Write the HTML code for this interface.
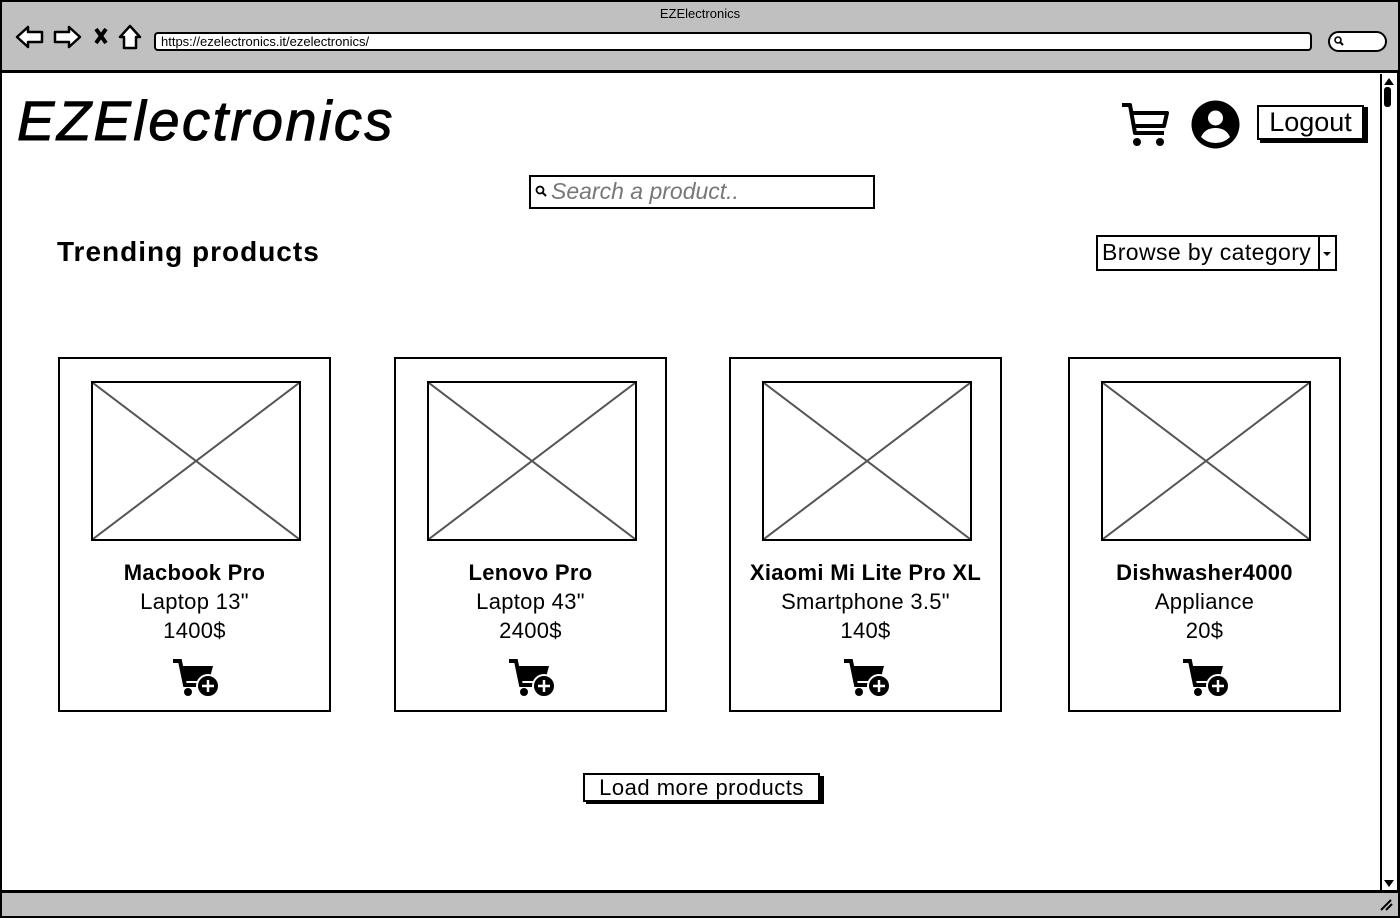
<!DOCTYPE html>
<html><head><meta charset="utf-8"><style>
*{margin:0;padding:0;box-sizing:border-box}
body{width:1400px;height:918px;background:#fff;position:relative;overflow:hidden;font-family:"Liberation Sans",sans-serif;color:#000}
.a{position:absolute}
.card{position:absolute;top:357px;width:273px;height:355px;border:2px solid #000;text-align:center}
.card .img{position:absolute;left:31px;top:22px;width:210px;height:160px;border:2px solid #000}
.card .t{position:absolute;left:0;right:0;top:199px;font-size:22px;line-height:29px;letter-spacing:0.3px}
.card .t b{font-weight:bold}
.card svg.c{position:absolute;left:111px;top:298px}
</style></head><body>
<!-- chrome -->
<div class="a" style="left:0;top:0;width:1400px;height:73px;background:#c0c0c0;border:2px solid #000;border-bottom:3px solid #000"></div>
<div class="a" style="left:0;top:6px;width:1400px;text-align:center;font-size:13px">EZElectronics</div>
<svg class="a" style="left:14px;top:22px" width="135" height="30" viewBox="0 0 135 30">
<path d="M3 15 L14 5 L14 10 L28 10 L28 20 L14 20 L14 25 Z" fill="#fff" stroke="#000" stroke-width="2.5" stroke-linejoin="round"/>
<path d="M66 15 L55 5 L55 10 L41 10 L41 20 L55 20 L55 25 Z" fill="#fff" stroke="#000" stroke-width="2.5" stroke-linejoin="round"/>
<path d="M82 7 L92 21 M92 7 L82 21" stroke="#000" stroke-width="4"/>
<path d="M116 4 L106 15 L110 15 L110 26 L122 26 L122 15 L126 15 Z" fill="#fff" stroke="#000" stroke-width="2.5" stroke-linejoin="round"/>
</svg>
<div class="a" style="left:154px;top:32px;width:1158px;height:19px;background:#fff;border:2px solid #000;border-radius:4px;font-size:13px;line-height:15px;padding-left:5px">https://ezelectronics.it/ezelectronics/</div>
<div class="a" style="left:1328px;top:31px;width:59px;height:21px;background:#fff;border:2px solid #000;border-radius:11px"></div>
<svg class="a" style="left:1333px;top:35px" width="12" height="12"><circle cx="5" cy="5" r="3" fill="none" stroke="#000" stroke-width="1.6"/><path d="M7 7 L10 10" stroke="#000" stroke-width="2"/></svg>
<div class="a" style="left:0;top:73px;width:2px;height:820px;background:#000"></div>
<div class="a" style="left:1397px;top:73px;width:3px;height:820px;background:#000"></div>
<!-- scrollbar -->
<div class="a" style="left:1380px;top:74px;width:15px;height:816px;border-left:2px solid #000"></div>
<div class="a" style="left:1384px;top:78px;width:0;height:0;border-left:5px solid transparent;border-right:5px solid transparent;border-bottom:7px solid #000"></div>
<div class="a" style="left:1384px;top:87px;width:7px;height:20px;background:#000;border-radius:3px"></div>
<div class="a" style="left:1384px;top:880px;width:0;height:0;border-left:5px solid transparent;border-right:5px solid transparent;border-top:7px solid #000"></div>
<div class="a" style="left:0;top:890px;width:1400px;height:28px;background:#c0c0c0;border:2px solid #000;border-top:3px solid #000"></div>
<svg class="a" style="left:1378px;top:896px" width="16" height="16"><path d="M3 14 L13 4 M8 14 L14 8" stroke="#000" stroke-width="2"/></svg>
<!-- header -->
<div class="a" style="left:17px;top:86px;font-size:56px;font-style:italic;line-height:70px;letter-spacing:2.5px;-webkit-text-stroke:1px #000">EZElectronics</div>
<svg class="a" style="left:1120px;top:101px" width="50" height="46" viewBox="0 0 50 46">
<path d="M2 4 L10 4 L15 32 L44 32 M12 12 L47 12 L44 25 L14 25" fill="none" stroke="#000" stroke-width="4" stroke-linejoin="round"/>
<circle cx="17" cy="41" r="4"/><circle cx="40" cy="41" r="4"/></svg>
<svg class="a" style="left:1191px;top:100px" width="49" height="49" viewBox="0 0 49 49">
<circle cx="24.5" cy="24.5" r="24" fill="#000"/><circle cx="24.5" cy="18" r="7.5" fill="#fff"/>
<path d="M10 37 Q14 28 24.5 28 Q35 28 39 37 Q33 43 24.5 43 Q16 43 10 37Z" fill="#fff"/></svg>
<div class="a" style="left:1260px;top:107px;width:108px;height:36px;background:#000"></div>
<div class="a" style="left:1257px;top:105px;width:107px;height:35px;border:2px solid #000;background:#fff;font-size:27px;line-height:31px;text-align:center">Logout</div>
<!-- search -->
<div class="a" style="left:529px;top:175px;width:346px;height:34px;border:2px solid #000"></div>
<svg class="a" style="left:534px;top:184px" width="14" height="14"><circle cx="6" cy="6" r="3.5" fill="none" stroke="#000" stroke-width="1.8"/><path d="M8.5 8.5 L12 12" stroke="#000" stroke-width="2"/></svg>
<div class="a" style="left:551px;top:176px;font-size:23px;line-height:30px;font-style:italic;color:#777">Search a product..</div>
<div class="a" style="left:57px;top:233px;font-size:28px;font-weight:bold;line-height:38px;letter-spacing:1px">Trending products</div>
<div class="a" style="left:1096px;top:235px;width:241px;height:36px;border:2px solid #000"></div>
<div class="a" style="left:1318px;top:235px;width:2px;height:36px;background:#000"></div>
<div class="a" style="left:1102px;top:236px;font-size:23px;line-height:32px;letter-spacing:0.4px">Browse by category</div>
<div class="a" style="left:1323px;top:252px;border-left:4px solid transparent;border-right:4px solid transparent;border-top:4px solid #000"></div>
<!-- cards -->
<div class="card" style="left:58px"><div class="img"><svg width="206" height="156"><path d="M0 0L206 156M206 0L0 156" stroke="#555" stroke-width="2"/></svg></div><div class="t"><b>Macbook Pro</b><br>Laptop 13"<br>1400$</div><svg class="c" width="50" height="42" viewBox="0 0 50 42"><path d="M2 4 L9 4 L14 28 L30 28" fill="none" stroke="#000" stroke-width="4"/><path d="M10 9 L42 9 L38 24 L13 24Z" fill="#000"/><circle cx="17" cy="35" r="4"/><circle cx="37" cy="29" r="11" fill="#000" stroke="#fff" stroke-width="2"/><path d="M37 23V35M31 29H43" stroke="#fff" stroke-width="2.5"/></svg></div>
<div class="card" style="left:394px"><div class="img"><svg width="206" height="156"><path d="M0 0L206 156M206 0L0 156" stroke="#555" stroke-width="2"/></svg></div><div class="t"><b>Lenovo Pro</b><br>Laptop 43"<br>2400$</div><svg class="c" width="50" height="42" viewBox="0 0 50 42"><path d="M2 4 L9 4 L14 28 L30 28" fill="none" stroke="#000" stroke-width="4"/><path d="M10 9 L42 9 L38 24 L13 24Z" fill="#000"/><circle cx="17" cy="35" r="4"/><circle cx="37" cy="29" r="11" fill="#000" stroke="#fff" stroke-width="2"/><path d="M37 23V35M31 29H43" stroke="#fff" stroke-width="2.5"/></svg></div>
<div class="card" style="left:729px"><div class="img"><svg width="206" height="156"><path d="M0 0L206 156M206 0L0 156" stroke="#555" stroke-width="2"/></svg></div><div class="t"><b>Xiaomi Mi Lite Pro XL</b><br>Smartphone 3.5"<br>140$</div><svg class="c" width="50" height="42" viewBox="0 0 50 42"><path d="M2 4 L9 4 L14 28 L30 28" fill="none" stroke="#000" stroke-width="4"/><path d="M10 9 L42 9 L38 24 L13 24Z" fill="#000"/><circle cx="17" cy="35" r="4"/><circle cx="37" cy="29" r="11" fill="#000" stroke="#fff" stroke-width="2"/><path d="M37 23V35M31 29H43" stroke="#fff" stroke-width="2.5"/></svg></div>
<div class="card" style="left:1068px"><div class="img"><svg width="206" height="156"><path d="M0 0L206 156M206 0L0 156" stroke="#555" stroke-width="2"/></svg></div><div class="t"><b>Dishwasher4000</b><br>Appliance<br>20$</div><svg class="c" width="50" height="42" viewBox="0 0 50 42"><path d="M2 4 L9 4 L14 28 L30 28" fill="none" stroke="#000" stroke-width="4"/><path d="M10 9 L42 9 L38 24 L13 24Z" fill="#000"/><circle cx="17" cy="35" r="4"/><circle cx="37" cy="29" r="11" fill="#000" stroke="#fff" stroke-width="2"/><path d="M37 23V35M31 29H43" stroke="#fff" stroke-width="2.5"/></svg></div>
<!-- load more -->
<div class="a" style="left:586px;top:776px;width:238px;height:28px;background:#000"></div>
<div class="a" style="left:583px;top:773px;width:237px;height:29px;border:2px solid #000;background:#fff;font-size:22px;line-height:25px;text-align:center;letter-spacing:0.5px">Load more products</div>
</body></html>
